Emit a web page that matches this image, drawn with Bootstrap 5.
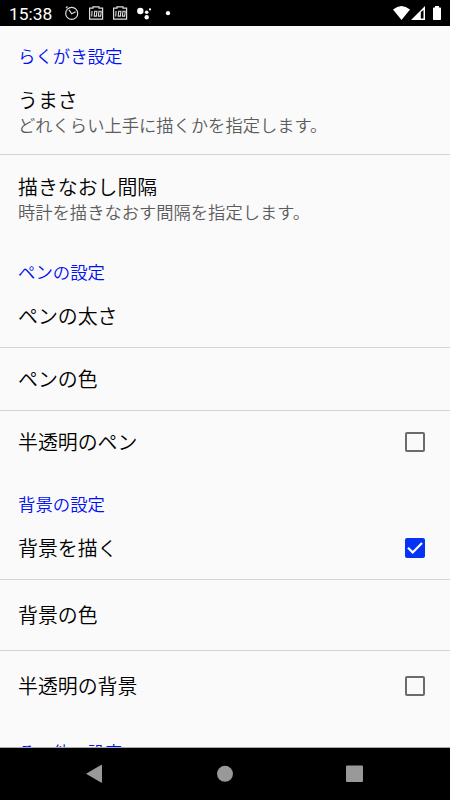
<!DOCTYPE html>
<html lang="ja">
<head>
<meta charset="utf-8">
<meta name="viewport" content="width=device-width, initial-scale=1">
<title>設定</title>
<link href="https://cdn.jsdelivr.net/npm/bootstrap@5.3.0/dist/css/bootstrap.min.css" rel="stylesheet">
<style>
body{font-family:"Noto Sans CJK JP",sans-serif;background:#fafafa;font-weight:350;color:#000}
.screen{height:800px}
.statusbar{height:26px;font:400 17.4px/28px Roboto,sans-serif}
.clock{padding-left:9px}
.settings{min-height:0}
.cat{height:43px;padding:16px 18px 0;font-size:17.4px;line-height:27px;color:#0010f0}
.pref{height:63px;padding:0 18px;border-bottom:1px solid #d4d4d4}
.pref.two{height:86px;padding-top:1px}
.pref.two.end{height:87px;padding-top:2px}
.pref.tall{height:71px}
.pref.end{border-bottom-color:transparent}
.pref-title{font-size:19.9px;line-height:26px}
.two .pref-title{line-height:27px;height:26px}
.pref-note{font-size:17.3px;line-height:26px;color:#5c5c5c}
.pref .form-check-input{width:20px;height:20px;margin:0 7px 0 0;border:2px solid #6b6b6b;border-radius:2px;background-color:#fafafa;flex:none}
.pref .form-check-input:checked{background-color:#0433f5;border-color:#0433f5;background-size:20px 20px;background-position:center;background-image:url("data:image/svg+xml,%3csvg xmlns='http://www.w3.org/2000/svg' viewBox='0 0 20 20'%3e%3cpath fill='none' stroke='%23fff' stroke-width='2.200' d='M3 9.800L7.700 14.400L17 5'/%3e%3c/svg%3e")}
.navkeys{height:53px;border-top:1px solid #aaa}
</style>
<script src="https://cdn.jsdelivr.net/npm/bootstrap@5.3.0/dist/js/bootstrap.bundle.min.js"></script>
</head>
<body>
<div class="screen d-flex flex-column overflow-hidden">
  <header class="statusbar bg-black text-white d-flex flex-shrink-0">
    <span class="clock">15:38</span>
    <svg class="position-absolute start-0 top-0" width="450" height="26" viewBox="0 0 450 26" fill="none" stroke="#ddd" stroke-width="1.2">
      <circle cx="71.700" cy="13.400" r="6"/><path d="M69 9.800l2.700 4 4-2M66 8l1.500-1.500"/>
      <g id="score"><path d="M89.600 8.200h3.400v-1.400h6v1.400h3.600v11h-13z"/><path stroke-width="1.100" d="M92.100 11l-.4 5.500M94.700 11.300h2.200l-.5 4.800h-2.200zM98.900 11.300h2.300l-.5 4.800h-2.300z"/></g>
      <use href="#score" x="24"/>
      <g fill="#fff" stroke="none"><circle cx="140.300" cy="11" r="3.200"/><circle cx="146.700" cy="12.300" r="1.800"/><circle cx="150" cy="9.400" r="1.100"/><circle cx="146.700" cy="17.200" r="2.200"/><circle cx="168" cy="13.200" r="2.100"/>
      <path d="M393 9.500q8.500-7 17 0L401.500 20z"/>
      <path fill-rule="evenodd" d="M425 6v14h-14zM420.800 12v6.600h2.700V10z"/>
      <path d="M433 8.200q0-.7.700-.7H435V6h4v1.500h1.300q.7 0 .7.700v11.100q0 .7-.7.700h-6.600q-.7 0-.7-.7z"/></g>
    </svg>
  </header>
  <main class="settings flex-grow-1 overflow-hidden">
    <div class="cat">らくがき設定</div>
    <div class="pref two d-flex flex-column justify-content-center"><div class="pref-title">うまさ</div><div class="pref-note">どれくらい上手に描くかを指定します。</div></div>
    <div class="pref two end d-flex flex-column justify-content-center"><div class="pref-title">描きなおし間隔</div><div class="pref-note">時計を描きなおす間隔を指定します。</div></div>
    <div class="cat">ペンの設定</div>
    <div class="pref d-flex align-items-center"><div class="pref-title">ペンの太さ</div></div>
    <div class="pref d-flex align-items-center"><div class="pref-title">ペンの色</div></div>
    <label class="pref end d-flex align-items-center justify-content-between"><span class="pref-title">半透明のペン</span><input class="form-check-input" type="checkbox"></label>
    <div class="cat">背景の設定</div>
    <label class="pref d-flex align-items-center justify-content-between"><span class="pref-title">背景を描く</span><input class="form-check-input" type="checkbox" checked></label>
    <div class="pref tall d-flex align-items-center"><div class="pref-title">背景の色</div></div>
    <label class="pref tall end d-flex align-items-center justify-content-between"><span class="pref-title">半透明の背景</span><input class="form-check-input" type="checkbox"></label>
    <div class="cat">その他の設定</div>
  </main>
  <footer class="navkeys bg-black flex-shrink-0">
    <svg class="d-block" width="450" height="52" viewBox="0 748 450 52" fill="#999"><path d="M86 773.800L101 765q1-.5 1 .5v16.600q0 1-1 .5z"/><circle cx="225" cy="773.800" r="8"/><rect x="346" y="765.500" width="17" height="16.500" rx="1"/></svg>
  </footer>
</div>
</body>
</html>
